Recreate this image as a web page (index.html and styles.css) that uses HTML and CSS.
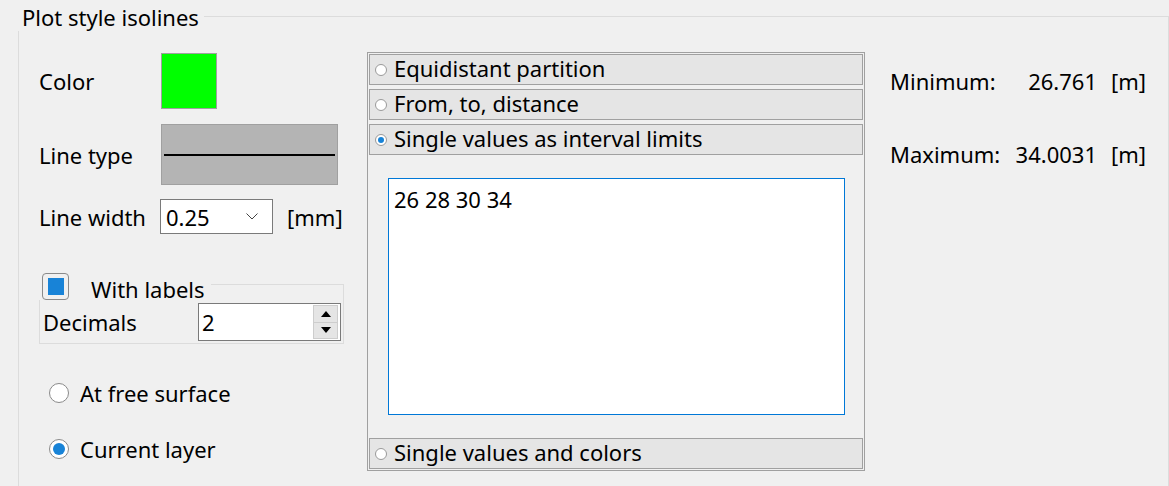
FILE: index.html
```html
<!DOCTYPE html>
<html lang="en">
<head>
    <meta charset="utf-8" />
    <title>Plot style isolines</title>
    <link rel="stylesheet" href="styles.css">
</head>
<body>
    <div class="dialog">
        <div class="group">
            <div class="group-head">
                <span class="group-title">Plot style isolines</span>
                <span class="group-rule"></span>
            </div>
            <div class="group-body">
                <div class="col-left">
                    <div class="row row-color">
                        <span class="lbl">Color</span>
                        <span class="swatch"></span>
                    </div>
                    <div class="row row-linetype">
                        <span class="lbl">Line type</span>
                        <span class="linetype"><span class="linetype-stroke"></span></span>
                    </div>
                    <div class="row row-width">
                        <span class="lbl">Line width</span>
                        <span class="combo">
                            <span class="combo-val">0.25</span>
                            <svg class="combo-arrow" width="12" height="7" viewBox="0 0 12 7"><polyline points="0.5,0.5 6,6 11.5,0.5" fill="none" stroke="#444" stroke-width="1" /></svg>
                        </span>
                        <span class="unit">[mm]</span>
                    </div>

                    <div class="sub">
                        <div class="sub-head">
                            <span class="check"><span class="check-mark"></span></span>
                            <span class="sub-title">With labels</span>
                            <span class="sub-rule"></span>
                        </div>
                        <div class="sub-body">
                            <span class="sub-lbl">Decimals</span>
                            <span class="spin">
                                <span class="spin-val">2</span>
                                <span class="spin-btns">
                                    <span class="spin-btn"><svg width="10" height="6" viewBox="0 0 10 6"><polygon points="5,0 10,6 0,6" fill="#000" /></svg></span>
                                    <span class="spin-btn"><svg width="10" height="6" viewBox="0 0 10 6"><polygon points="0,0 10,0 5,6" fill="#000" /></svg></span>
                                </span>
                            </span>
                        </div>
                    </div>

                    <div class="radio-row first"><span class="radio"></span>At free surface</div>
                    <div class="radio-row"><span class="radio checked"></span>Current layer</div>
                </div>

                <div class="toolbox">
                    <div class="tb-head"><span class="tb-radio"></span>Equidistant partition</div>
                    <div class="tb-head"><span class="tb-radio"></span>From, to, distance</div>
                    <div class="tb-head"><span class="tb-radio checked"></span>Single values as interval limits</div>
                    <div class="tb-page">
                        <div class="values">26 28 30 34</div>
                    </div>
                    <div class="tb-head"><span class="tb-radio"></span>Single values and colors</div>
                </div>

                <div class="range">
                    <span class="range-lbl">Minimum:</span><span class="range-val">26.761</span><span class="range-unit">[m]</span>
                    <span class="range-lbl">Maximum:</span><span class="range-val">34.0031</span><span class="range-unit">[m]</span>
                </div>
            </div>
        </div>
    </div>
</body>
</html>
```

FILE: styles.css
```css
body {
    margin: 0;
    background-color: #f0f0f0;
    font-family: "Noto Sans", "Open Sans", sans-serif;
    font-size: 22px;
    color: #000;
}

.dialog {
    width: 1169px;
    height: 486px;
    padding-left: 18px;
    box-sizing: border-box;
    overflow: hidden;
}

/* main group box */
.group-head {
    display: flex;
    height: 31px;
}

.group-title {
    padding-left: 4px;
    line-height: 34px;
    white-space: nowrap;
}

.group-rule {
    flex: 1;
    margin-top: 16px;
    margin-left: 5px;
    border-top: 1px solid #dcdcdc;
    border-right: 1px solid #dcdcdc;
}

.group-body {
    display: flex;
    height: 455px;
    border-left: 1px solid #dcdcdc;
    border-right: 1px solid #dcdcdc;
}

/* left column */
.col-left {
    width: 348px;
    padding-left: 20px;
    box-sizing: border-box;
    display: flex;
    flex-direction: column;
}

.row {
    display: flex;
    align-items: center;
}

.lbl {
    width: 122px;
    flex-shrink: 0;
}

.row-color {
    margin-top: 22px;
    height: 56px;
}

.swatch {
    width: 56px;
    height: 56px;
    box-sizing: border-box;
    border: 1px solid #a0a0a0;
    background-color: #00ff00;
}

.row-linetype {
    margin-top: 15px;
    height: 61px;
}

.linetype {
    width: 177px;
    height: 61px;
    box-sizing: border-box;
    border: 1px solid #a0a0a0;
    background-color: #b4b4b4;
    display: flex;
    align-items: center;
    padding: 0 2px;
}

.linetype-stroke {
    flex: 1;
    height: 2px;
    background-color: #000;
}

.row-width {
    margin-top: 14px;
    height: 35px;
}

.combo {
    width: 113px;
    height: 35px;
    margin-left: -1px;
    box-sizing: border-box;
    border: 1px solid #7a7a7a;
    background-color: #fff;
    display: flex;
    align-items: center;
    justify-content: space-between;
    padding: 0 14px 0 5px;
}

.unit {
    margin-left: 14px;
}

/* "With labels" group */
.sub {
    margin-top: 39px;
    width: 305px;
}

.sub-head {
    display: flex;
    height: 27px;
    padding-left: 3px;
}

.check {
    width: 27px;
    height: 27px;
    box-sizing: border-box;
    border: 1px solid #8a8a8a;
    border-radius: 4px;
    display: flex;
    align-items: center;
    justify-content: center;
    flex-shrink: 0;
}

.check-mark {
    width: 16px;
    height: 17px;
    background-color: #1883d7;
}

.sub-title {
    margin-left: 22px;
    line-height: 32px;
    white-space: nowrap;
}

.sub-rule {
    flex: 1;
    margin-top: 11px;
    margin-left: 6px;
    border-top: 1px solid #dcdcdc;
    border-right: 1px solid #dcdcdc;
}

.sub-body {
    height: 44px;
    box-sizing: border-box;
    border: 1px solid #dcdcdc;
    border-top: none;
    padding: 3px 2px 2px 3px;
    display: flex;
    justify-content: space-between;
    align-items: center;
}

.spin {
    width: 143px;
    height: 38px;
    box-sizing: border-box;
    border: 1px solid #7a7a7a;
    background-color: #fff;
    display: flex;
    align-items: center;
    justify-content: space-between;
    padding: 1px 2px 1px 3px;
}

.spin-btns {
    width: 25px;
    height: 100%;
    display: flex;
    flex-direction: column;
    border: 1px solid #cdcdcd;
    box-sizing: border-box;
    background-color: #e5e5e5;
}

.spin-btn {
    flex: 1;
    display: flex;
    align-items: center;
    justify-content: center;
}

.spin-btn + .spin-btn {
    border-top: 1px solid #cdcdcd;
}

/* radios */
.radio-row {
    display: flex;
    align-items: center;
    height: 30px;
    margin-top: 26px;
    padding-left: 10px;
}

.radio-row.first {
    margin-top: 34px;
}

.radio {
    width: 20px;
    height: 20px;
    box-sizing: border-box;
    border: 1px solid #8a8a8a;
    border-radius: 50%;
    background-color: #fff;
    margin-right: 11px;
    display: flex;
    align-items: center;
    justify-content: center;
}

.radio.checked::after {
    content: '';
    width: 12px;
    height: 12px;
    border-radius: 50%;
    background-color: #1883d7;
}

/* toolbox panel */
.toolbox {
    width: 498px;
    height: 419px;
    margin-top: 21px;
    box-sizing: border-box;
    border: 1px solid #a0a0a0;
    padding: 1px;
    display: flex;
    flex-direction: column;
    gap: 4px;
}

.tb-head {
    height: 31px;
    flex-shrink: 0;
    box-sizing: border-box;
    border: 1px solid #a0a0a0;
    background-color: #e5e5e5;
    display: flex;
    align-items: center;
    padding: 0 0 3px 5px;
    line-height: 26px;
}

.tb-radio {
    width: 12px;
    height: 12px;
    box-sizing: border-box;
    border: 1px solid #9a9a9a;
    border-radius: 50%;
    background-color: #fff;
    margin: 3px 7px 0 0;
    display: flex;
    align-items: center;
    justify-content: center;
}

.tb-radio.checked::after {
    content: '';
    width: 6px;
    height: 6px;
    border-radius: 50%;
    background-color: #1883d7;
}

.tb-page {
    flex: 1;
    margin: -4px 0;
    padding: 23px 18px 23px 19px;
    display: flex;
}

.values {
    flex: 1;
    border: 1px solid #0078d7;
    background-color: #fff;
    padding: 5px 5px;
    line-height: 30px;
}

/* range info */
.range {
    margin-left: 25px;
    margin-top: 35px;
    display: grid;
    grid-template-columns: 110px 97px auto;
    grid-auto-rows: 30px;
    row-gap: 43px;
    align-items: center;
    align-content: start;
}

.range-val {
    text-align: right;
}

.range-unit {
    padding-left: 14px;
}
```
